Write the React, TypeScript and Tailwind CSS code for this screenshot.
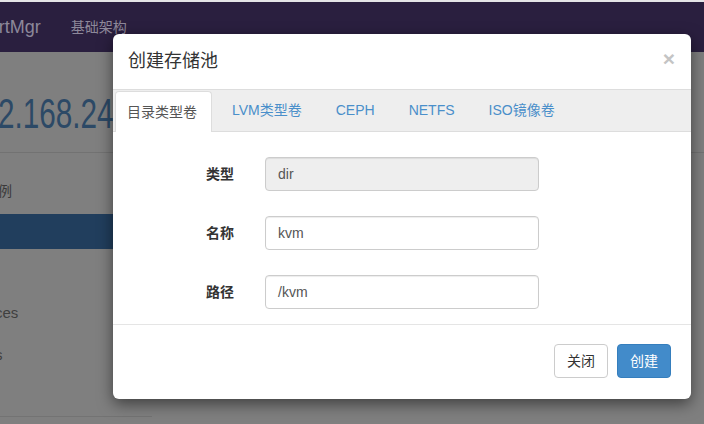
const font = "font-['Liberation_Sans','Noto_Sans_CJK_SC',sans-serif]";

function Tabs() {
  const tabs = ["LVM类型卷", "CEPH", "NETFS", "ISO镜像卷"];
  return (
    <div className="flex h-[43px] border-y border-[#dddddd] bg-[#eeeeee] pl-[2px]">
      <div className="-mb-px mr-[4px] mt-[1px] flex items-center rounded-t-[4px] border border-b-0 border-[#dddddd] bg-white pl-[11px] pr-[14px] text-[14px] text-[#555555]">
        目录类型卷
      </div>
      {tabs.map((t) => (
        <div key={t} className="mr-[2px] flex items-center px-[16px] text-[14px] text-[#4a8fca]">
          {t}
        </div>
      ))}
    </div>
  );
}

function Field({ label, value, disabled }: { label: string; value: string; disabled?: boolean }) {
  return (
    <div className="flex h-[34px] items-center">
      <div className="w-[121px] text-right text-[14px] font-bold text-[#333333]">{label}</div>
      <div
        className={`ml-[31px] flex h-[34px] w-[274px] items-center rounded-[4px] border border-[#cccccc] px-[12px] text-[14px] text-[#555555] shadow-[inset_0_1px_1px_rgba(0,0,0,0.075)] ${
          disabled ? "bg-[#eeeeee]" : "bg-white"
        }`}
      >
        {value}
      </div>
    </div>
  );
}

export default function App() {
  return (
    <div className={`relative h-[424px] w-[704px] overflow-hidden bg-[#7f7f7f] ${font}`}>
      <div className="h-[2px] bg-[#e4e4e6]" />
      <nav className="flex h-[50px] items-center bg-[#2a1f3f] text-[#8d889a]">
        <span className="-ml-[17px] text-[18px]">VirtMgr</span>
        <span className="ml-[30px] text-[14px]">基础架构</span>
      </nav>

      <div className="mt-[38px] -ml-[35px] origin-left scale-x-[0.69] whitespace-nowrap text-[43px] leading-[47px] text-[#2c4966]">
        192.168.245.128
      </div>
      <div className="mt-[15px] h-px w-full bg-[#727272]" />

      <div className="flex w-[152px] flex-col">
        <div className="mt-[28px] h-[20px] -ml-[2px] text-[14px] leading-[20px] text-[#3a3a3a]">例</div>
        <div className="mt-[13px] h-[35px] w-[400px] bg-[#213e5d]" />
        <div className="mt-[54px] -ml-[5px] text-[15px] leading-[20px] text-[#3f3f3f]">ces</div>
        <div className="mt-[22px] -ml-[5px] text-[15px] leading-[20px] text-[#3f3f3f]">s</div>
        <div className="mt-[51px] h-px w-[152px] bg-[#737373]" />
      </div>

      <div className="absolute left-[113px] top-[34px] w-[578px] rounded-[6px] bg-white shadow-[0_5px_15px_rgba(0,0,0,0.5)]">
        <div className="flex h-[55px] items-center justify-between px-[15px]">
          <span className="text-[18px] text-[#333333]">创建存储池</span>
          <span className="-mt-[6px] mr-[1px] text-[21px] font-bold leading-none text-[#c4c4c4]">×</span>
        </div>
        <Tabs />
        <div className="flex flex-col gap-[25px] pb-[15px] pt-[25px]">
          <Field label="类型" value="dir" disabled />
          <Field label="名称" value="kvm" />
          <Field label="路径" value="/kvm" />
        </div>
        <div className="flex justify-end gap-[9px] border-t border-[#e5e5e5] pb-[21px] pr-[20px] pt-[19px]">
          <div className="flex h-[34px] w-[54px] items-center justify-center rounded-[4px] border border-[#cccccc] bg-white text-[14px] text-[#333333]">
            关闭
          </div>
          <div className="flex h-[34px] w-[54px] items-center justify-center rounded-[4px] border border-[#357ebd] bg-[#428bca] text-[14px] text-white">
            创建
          </div>
        </div>
      </div>
    </div>
  );
}
